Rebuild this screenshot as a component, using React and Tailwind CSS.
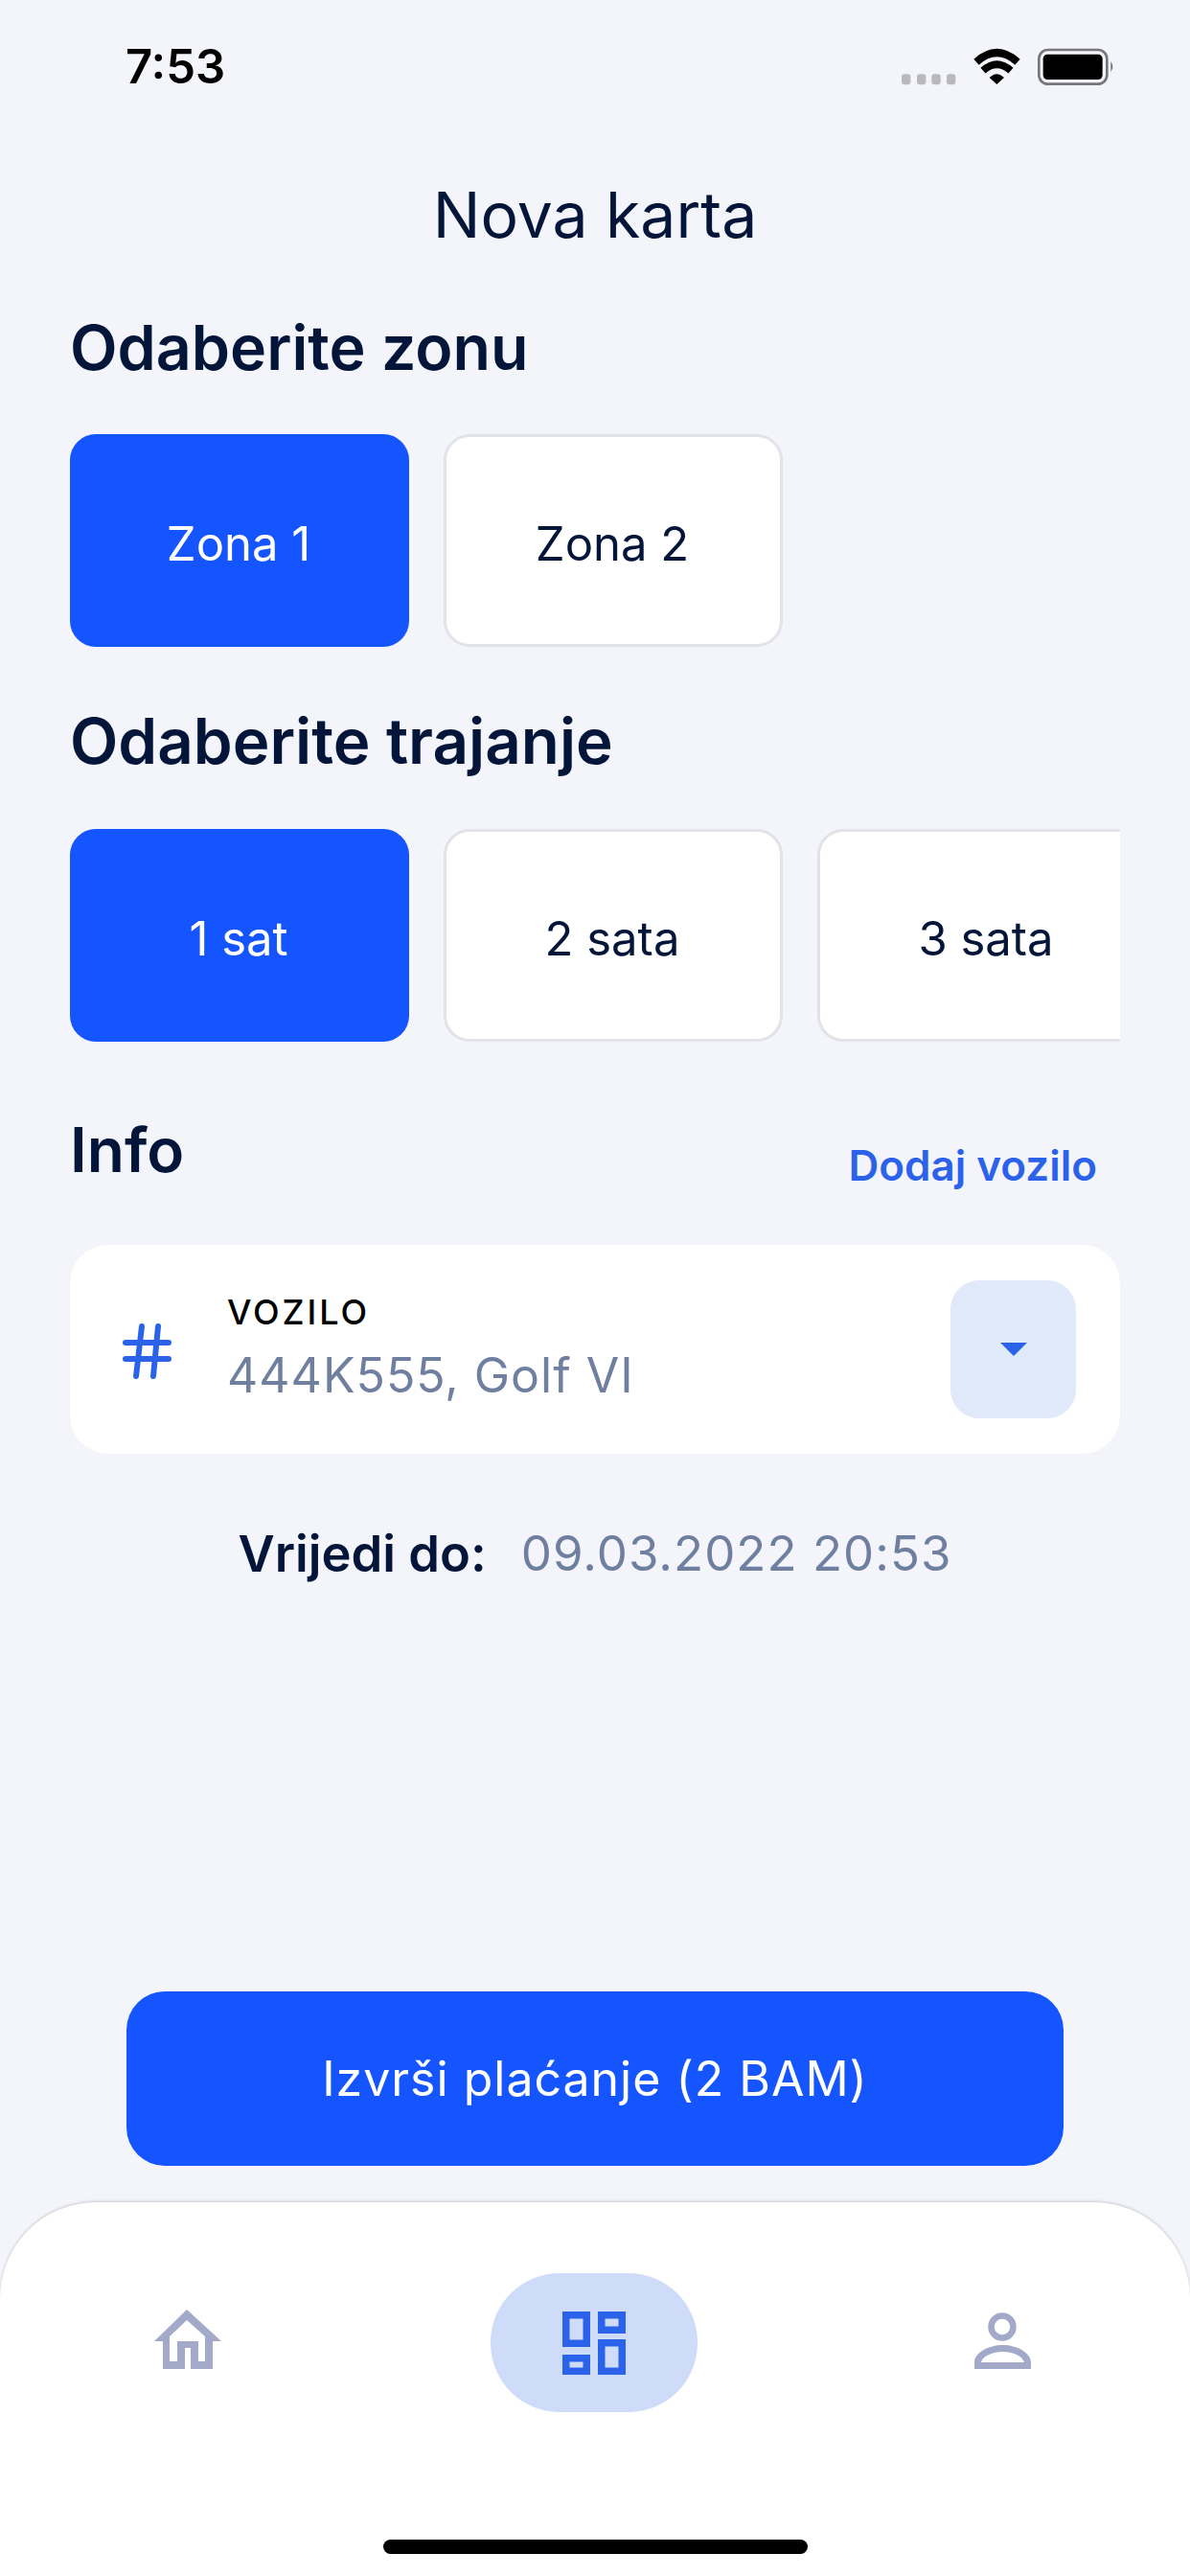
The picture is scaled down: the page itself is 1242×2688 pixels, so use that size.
const font = { fontFamily: 'Inter, "Noto Sans", sans-serif' }

function StatusIcons() {
  return (
    <svg width="300" height="80" viewBox="0 0 900 240">
      {[123, 171, 217, 264].map(x => <rect key={x} x={x} y="142" width="28" height="33" rx="9" fill="#b9b9bc" />)}
      <path d="M357 104 Q421 46 486 104" fill="none" stroke="#000" strokeWidth="24" />
      <path d="M378 131 Q421 92 465 131" fill="none" stroke="#000" strokeWidth="23" />
      <path d="M398 153 Q421 130 444 153 L421 174 Z" fill="#000" />
      <rect x="553" y="66" width="213" height="107" rx="28" fill="none" stroke="#77777b" strokeWidth="8" />
      <rect x="566" y="80" width="186" height="79" rx="14" fill="#000" />
      <path d="M778 103 Q790 118 778 136 Z" fill="#77777b" />
    </svg>
  )
}

function OptionButton({ label, active }) {
  return (
    <button className={`w-[354px] h-[222px] shrink-0 rounded-[27px] flex items-center justify-center pt-[8px] pr-[2px] text-[49px] ${active ? 'bg-[#1455ff] text-white' : 'bg-white border-[3px] border-[#e2e3e8] text-[#031539]'}`}>
      {label}
    </button>
  )
}

function HomeIcon() {
  return (
    <svg width="110" height="90" viewBox="0 0 110 90">
      <path fill="#a3a9c8" fillRule="evenodd" d="M55 10 L91 43 H82 V72 H59 V50 H53 V72 H30 V43 H21 Z M55 21 L37 38 V64 H45 V43 H67 V64 H74 V38 Z" />
    </svg>
  )
}

function GridIcon() {
  return (
    <svg width="66" height="66" viewBox="0 0 66 66" fill="none" stroke="#2b62ea" strokeWidth="7.5">
      <rect x="3.75" y="3.75" width="21.5" height="29.5" />
      <rect x="40.75" y="3.75" width="21.5" height="15.5" />
      <rect x="3.75" y="48.75" width="21.5" height="13.5" />
      <rect x="40.75" y="32.75" width="21.5" height="29.5" />
    </svg>
  )
}

function UserIcon() {
  return (
    <svg width="110" height="90" viewBox="0 0 110 90">
      <circle cx="56" cy="28" r="11.5" fill="none" stroke="#a3a9c8" strokeWidth="6.5" />
      <path fill="#a3a9c8" fillRule="evenodd" d="M27 72 V65 C27 55 42 47 56.5 47 C71 47 86 55 86 65 V72 Z M34 65 H79 C77 58 67 54 56.5 54 C46 54 36 58 34 65 Z" />
    </svg>
  )
}

export default function App() {
  return (
    <div style={font} className="w-[1242px] h-[2688px] bg-[#f3f5fb] flex flex-col overflow-hidden text-[#031539]">
      {/* Status bar */}
      <div className="flex justify-between pt-[30px] pl-[131px] pr-[42px] h-[110px]">
        <span className="text-[49px] leading-[80px] font-semibold text-black">7:53</span>
        <StatusIcons />
      </div>

      <h1 className="text-center text-[66px] leading-[80px] mt-[74px]">Nova karta</h1>

      <div className="px-[73px] flex flex-col flex-1">
        <h2 className="text-[64.5px] leading-[72px] font-semibold mt-[63px]">Odaberite zonu</h2>
        <div className="flex gap-[36px] mt-[54px]">
          <OptionButton label="Zona 1" active />
          <OptionButton label="Zona 2" />
        </div>

        <h2 className="text-[65.5px] leading-[72px] font-semibold mt-[63px]">Odaberite trajanje</h2>
        <div className="flex gap-[36px] mt-[55px] overflow-hidden">
          <OptionButton label="1 sat" active />
          <OptionButton label="2 sata" />
          <OptionButton label="3 sata" />
        </div>

        <div className="flex justify-between items-start mt-[74px] h-[138px]">
          <h2 className="text-[64px] leading-[72px] font-semibold mt-[3px]">Info</h2>
          <a className="text-[44px] leading-[60px] font-semibold text-[#2c62ea] mr-[24px] mt-[25px]">Dodaj vozilo</a>
        </div>

        {/* Vehicle card */}
        <div className="h-[218px] bg-white rounded-[40px] flex items-center pl-[55px] pr-[46px]">
          <svg width="53" height="58" viewBox="0 0 53 58" stroke="#2b62ea" fill="none" strokeWidth="6" strokeLinecap="round" className="shrink-0 mt-[3px]">
            <path d="M20 3 L14 55 M37 3 L32 55" />
            <path d="M3 20 H48 M3 37 H48" />
          </svg>
          <div className="ml-[56px] flex-1 -mt-[4px]">
            <div className="text-[36px] leading-[44px] font-medium tracking-[0.08em] text-black">VOZILO</div>
            <div className="text-[50px] leading-[60px] tracking-[0.02em] text-[#6f7f9f] mt-[14px]">444K555, Golf VI</div>
          </div>
          <button className="w-[131px] h-[144px] rounded-[30px] bg-[#e0eafb] flex items-center justify-center">
            <svg width="28" height="14" viewBox="0 0 28 14"><path d="M0 0 H28 L14 14 Z" fill="#2b62ea" /></svg>
          </button>
        </div>

        <div className="flex justify-center gap-[36px] mt-[74px] text-[51px] leading-[60px]">
          <span className="font-semibold text-[52.5px]">Vrijedi do:</span>
          <span className="text-[#6f7f9f] tracking-[0.02em]">09.03.2022 20:53</span>
        </div>
      </div>

      <button className="mx-[132px] h-[182px] rounded-[40px] bg-[#1455ff] text-white text-[50px] tracking-[0.02em] shrink-0">
        Izvrši plaćanje (2 BAM)
      </button>

      {/* Tab bar */}
      <div className="mt-[38px] h-[390px] shrink-0 bg-white rounded-t-[100px] shadow-[0_-1px_3px_rgba(0,0,0,0.18)] pt-[74px] flex flex-col">
        <div className="flex items-center justify-between pl-[140px] pr-[142px]">
          <HomeIcon />
          <div className="w-[216px] h-[145px] rounded-[72px] bg-[#cedcfa] flex items-center justify-center">
            <GridIcon />
          </div>
          <UserIcon />
        </div>
        <div className="w-[443px] h-[15px] rounded-full bg-black mx-auto mt-[133px]" />
      </div>
    </div>
  )
}
